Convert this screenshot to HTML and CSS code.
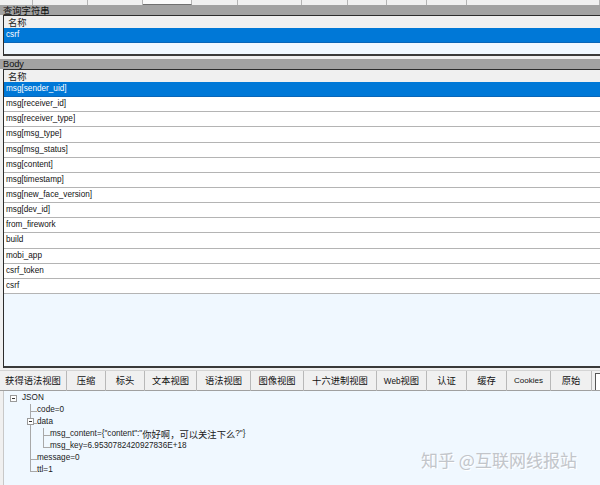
FILE: index.html
```html
<!DOCTYPE html>
<html lang="zh-CN">
<head>
    <meta charset="UTF-8">
    <meta name="viewport" content="width=device-width, initial-scale=1.0">
    <title>WebForms</title>
    <link rel="stylesheet" href="styles.css">
</head>
<body>
    <div class="topstrip">
        <span></span><span></span><span></span><span class="active"></span><span></span><span></span><span></span><span></span><span></span><span></span><span></span>
    </div>

    <div class="bar cn">查询字符串</div>
    <div class="grid grid-query">
        <div class="grid-head cn">名称</div>
        <div class="row selected">csrf</div>
    </div>

    <div class="bar bar-body">Body</div>
    <div class="grid grid-body">
        <div class="grid-head cn">名称</div>
        <div class="row selected">msg[sender_uid]</div>
        <div class="row">msg[receiver_id]</div>
        <div class="row">msg[receiver_type]</div>
        <div class="row">msg[msg_type]</div>
        <div class="row">msg[msg_status]</div>
        <div class="row">msg[content]</div>
        <div class="row">msg[timestamp]</div>
        <div class="row">msg[new_face_version]</div>
        <div class="row">msg[dev_id]</div>
        <div class="row">from_firework</div>
        <div class="row">build</div>
        <div class="row">mobi_app</div>
        <div class="row">csrf_token</div>
        <div class="row">csrf</div>
    </div>

    <div class="tabs">
        <div class="tab cn">获得语法视图</div>
        <div class="tab cn">压缩</div>
        <div class="tab cn">标头</div>
        <div class="tab cn">文本视图</div>
        <div class="tab cn">语法视图</div>
        <div class="tab cn">图像视图</div>
        <div class="tab cn">十六进制视图</div>
        <div class="tab cn"><span class="en">Web</span>视图</div>
        <div class="tab cn">认证</div>
        <div class="tab cn">缓存</div>
        <div class="tab en">Cookies</div>
        <div class="tab cn">原始</div>
        <div class="tab-more"></div>
    </div>

    <div class="tree-panel">
        <div class="tree">
            <div class="node"><span class="toggle"></span>JSON</div>
            <ul class="kids">
                <li><div class="node">code=0</div></li>
                <li>
                    <span class="toggle"></span>
                    <div class="node">data</div>
                    <ul class="kids">
                        <li><div class="node">msg_content={"content":"<span class="cn">你好啊，可以关注下么</span>?"}</div></li>
                        <li><div class="node">msg_key=6.9530782420927836E+18</div></li>
                    </ul>
                </li>
                <li><div class="node">message=0</div></li>
                <li><div class="node">ttl=1</div></li>
            </ul>
        </div>
        <div class="watermark">知乎 @互联网线报站</div>
    </div>
</body>
</html>
```

FILE: styles.css
```css
* {
    box-sizing: border-box;
}

body {
    margin: 0;
    width: 600px;
    height: 485px;
    overflow: hidden;
    background: #f0f0f0;
    font-family: "Liberation Sans", Arial, "Noto Sans CJK SC", sans-serif;
    font-size: 8.2px;
    color: #1a1a1a;
}

.cn {
    font-family: "Noto Sans CJK SC", "Liberation Sans", sans-serif;
    font-size: 9.3px;
}

.en {
    font-family: "Liberation Sans", Arial, sans-serif;
    font-size: 8.2px;
}

/* remains of the tab row above */
.topstrip {
    height: 5px;
    display: grid;
    grid-template-columns: 33px 55px 55px 49px 46px 64px 46px 39px 40px 40px 1fr;
    background: #f0f0f0;
}

.topstrip span {
    border-right: 1px solid #b4b4b4;
}

.topstrip .active {
    background: #fafafa;
    border-bottom: 1px solid #707070;
}

.bar {
    height: 10px;
    line-height: 10px;
    padding-left: 3px;
    background: #a2a2a2;
    color: #111;
    overflow: hidden;
}

.bar-body {
    margin-top: 3px;
    font-size: 9.2px;
    line-height: 11px;
}

.grid {
    margin-left: 3px;
    background: #f0f8ff;
    border-top: 1px solid #2c2c2c;
    border-left: 1px solid #2c2c2c;
    border-bottom: 2px solid #3a3a3a;
    overflow: hidden;
}

.grid-query {
    height: 41px;
}

.grid-body {
    height: 299px;
}

.grid-head {
    height: 12px;
    line-height: 12px;
    padding-left: 4px;
    background: #f0f0f0;
    color: #222;
}

.row {
    height: 15.15px;
    line-height: 14px;
    padding-left: 2px;
    background: #fff;
    border-bottom: 1px solid #b4b4b4;
    white-space: nowrap;
    color: #111;
}

.row.selected {
    background: #0078d7;
    color: #fff;
    border-bottom-color: #0a66b8;
}

.tabs {
    margin-top: 2px;
    height: 21px;
    display: grid;
    grid-template-columns: 67px 39px 39px 52px 54px 53px 73px 50px 40px 40px 44px 41px 1fr;
    background: #f0f0f0;
    border-top: 1px solid #d4d4d4;
    border-bottom: 1px solid #a0a0a0;
}

.tab {
    text-align: center;
    line-height: 19px;
    color: #111;
    border-right: 1px solid #b8b8b8;
    white-space: nowrap;
}

.tab.en {
    font-size: 8px;
}

.tab-more {
    margin: 2px 0 1px 3px;
    background: #fff;
    border-left: 1px solid #555;
    border-top: 1px solid #555;
}

.tree-panel {
    position: relative;
    height: 94px;
    margin-left: 3px;
    background: #f0f8ff;
    border-left: 1px solid #c8c8c8;
}

.tree {
    padding: 1px 0 0 6px;
}

.node {
    display: flex;
    align-items: center;
    height: 12px;
    line-height: 12px;
    white-space: nowrap;
}

.toggle {
    display: inline-block;
    position: relative;
    width: 7px;
    height: 7px;
    margin-right: 5px;
    background: #fff;
    border: 1px solid #9a9a9a;
}

.toggle::after {
    content: "";
    position: absolute;
    left: 1px;
    top: 2px;
    width: 3px;
    height: 1px;
    background: #333;
}

.kids {
    list-style: none;
    margin: 0 0 0 20px;
    padding: 0;
}

.kids .kids {
    margin-left: 6px;
}

.kids li {
    position: relative;
    padding-left: 7px;
}

/* tree connector lines */
.kids li::before {
    content: "";
    position: absolute;
    left: 0;
    top: 0;
    width: 6px;
    height: 7px;
    border-left: 1px solid #a8a8a8;
    border-bottom: 1px solid #a8a8a8;
}

.kids li::after {
    content: "";
    position: absolute;
    left: 0;
    top: 6px;
    bottom: 0;
    border-left: 1px solid #a8a8a8;
}

.kids li:last-child::after {
    display: none;
}

.kids li > .toggle {
    position: absolute;
    left: -3px;
    top: 2px;
    z-index: 1;
}

.watermark {
    position: absolute;
    left: 417px;
    top: 60px;
    font-family: "Noto Sans CJK SC", sans-serif;
    font-size: 17px;
    line-height: 17px;
    color: #c2c5ca;
    text-shadow: 1px 1px 0 #fff;
    white-space: nowrap;
}
```
